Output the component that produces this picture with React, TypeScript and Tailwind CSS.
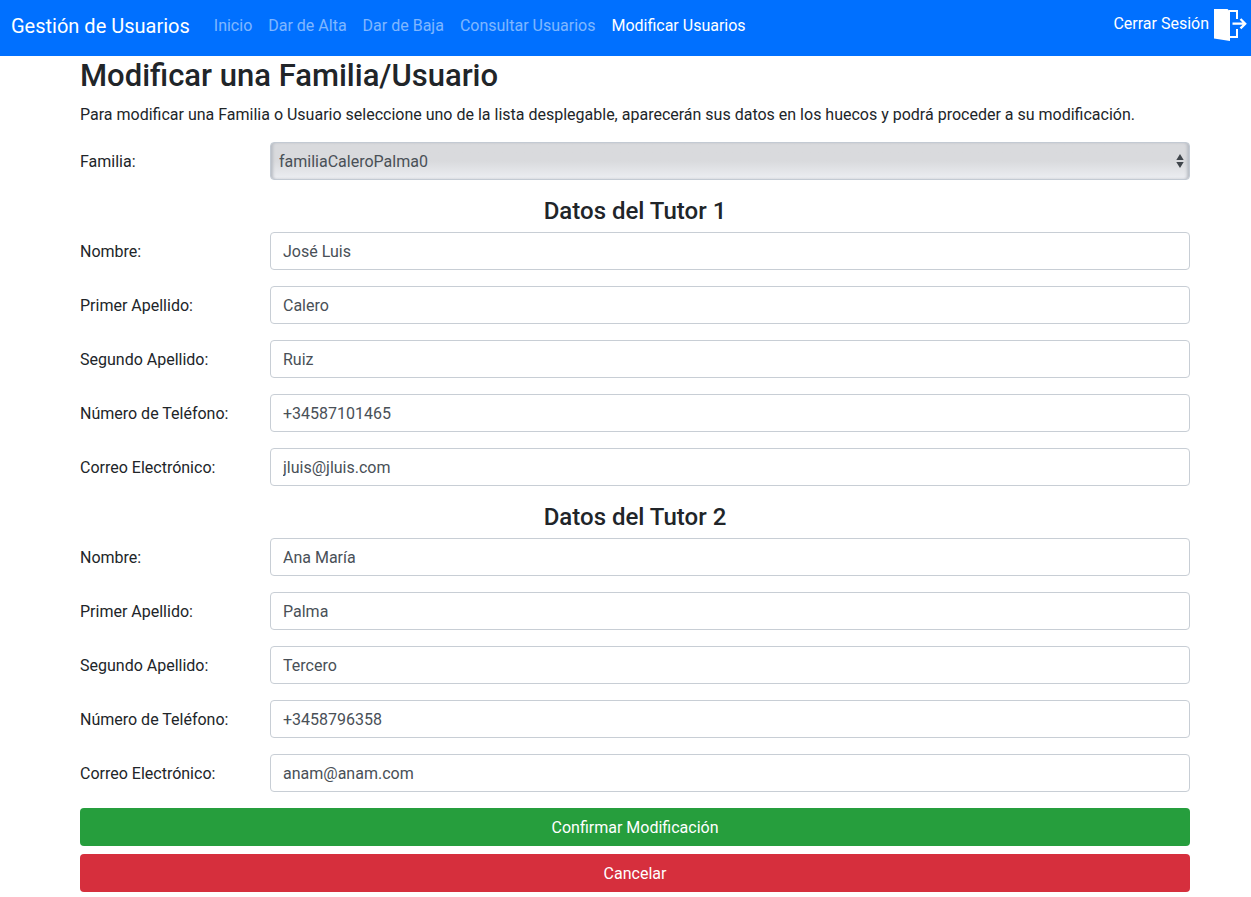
import React from 'react';

type Field = { label: string; value: string; type: string };

const tutors: { title: string; fields: Field[] }[] = [
  {
    title: 'Datos del Tutor 1',
    fields: [
      { label: 'Nombre:', value: 'José Luis', type: 'text' },
      { label: 'Primer Apellido:', value: 'Calero', type: 'text' },
      { label: 'Segundo Apellido:', value: 'Ruiz', type: 'text' },
      { label: 'Número de Teléfono:', value: '+34587101465', type: 'tel' },
      { label: 'Correo Electrónico:', value: 'jluis@jluis.com', type: 'email' },
    ],
  },
  {
    title: 'Datos del Tutor 2',
    fields: [
      { label: 'Nombre:', value: 'Ana María', type: 'text' },
      { label: 'Primer Apellido:', value: 'Palma', type: 'text' },
      { label: 'Segundo Apellido:', value: 'Tercero', type: 'text' },
      { label: 'Número de Teléfono:', value: '+3458796358', type: 'tel' },
      { label: 'Correo Electrónico:', value: 'anam@anam.com', type: 'email' },
    ],
  },
];

const links = ['Inicio', 'Dar de Alta', 'Dar de Baja', 'Consultar Usuarios', 'Modificar Usuarios'];

function ExitIcon() {
  return (
    <svg viewBox="0 0 34 34" className="size-[34px]" aria-hidden="true">
      <path d="M1 1H14.500L17 3.500V33L1 30.500Z" fill="#fff" />
      <path d="M16 3H24V11M24 21V29H17" fill="none" stroke="#fff" strokeWidth="2" />
      <path d="M19.500 15.700H32M27.500 11 32.200 15.700 27.500 20.400" fill="none" stroke="#fff" strokeWidth="2.300" />
    </svg>
  );
}

export default function App() {
  return (
    <div className="min-h-screen bg-white font-[Roboto,sans-serif] text-base leading-6 text-[#212529]">
      <nav className="flex h-14 items-center bg-[#0070ff] pb-1 pl-[11px] pr-1 text-white">
        <a href="#" className="mr-4 text-xl">Gestión de Usuarios</a>
        <ul className="flex">
          {links.map((l, i) => (
            <li key={l}>
              <a href="#" className={i === 4 ? 'px-2 text-white' : 'px-2 text-white/50'}>{l}</a>
            </li>
          ))}
        </ul>
        <a href="#" className="ml-auto flex items-center gap-1 pb-0.5">
          <span className="pb-0.5">Cerrar Sesión</span>
          <ExitIcon />
        </a>
      </nav>
      <main className="pl-20 pr-[61px]">
        <h1 className="mb-1.5 text-[31px] font-medium leading-10">Modificar una Familia/Usuario</h1>
        <p className="mb-[15px] pt-px">
          Para modificar una Familia o Usuario seleccione uno de la lista desplegable, aparecerán sus datos en los huecos y podrá proceder a su modificación.
        </p>
        <form>
          <div className="mb-4 flex items-center">
            <label htmlFor="familia" className="w-[190px] pt-0.5">Familia:</label>
            <div className="relative flex-1">
              <select
                id="familia"
                className="block h-[38px] w-full appearance-none rounded border border-[#c3cad3] bg-linear-to-b from-[#d9dadd] from-50% to-[#eceef2] pl-2 pr-6 pt-0.5 text-[#495057] shadow-[inset_3px_0_3px_-1px_#b9bdc4,inset_-3px_0_3px_-1px_#b9bdc4]"
              >
                <option>familiaCaleroPalma0</option>
              </select>
              <svg viewBox="0 0 8 14" className="pointer-events-none absolute right-1.5 top-3 h-[14px] w-2" aria-hidden="true">
                <path d="M4 0 7.700 6H.3ZM4 14 .3 8H7.700Z" fill="#40464c" />
              </svg>
            </div>
          </div>
          {tutors.map((t, ti) => (
            <fieldset key={t.title}>
              <legend className="mb-1.5 w-full text-center text-2xl font-medium leading-[30px]">{t.title}</legend>
              {t.fields.map((f, i) => (
                <div key={f.label} className="mb-4 flex items-center">
                  <label htmlFor={`t${ti}-${i}`} className="w-[190px] pt-0.5">{f.label}</label>
                  <input id={`t${ti}-${i}`} type={f.type} defaultValue={f.value} className="h-[38px] min-w-0 flex-1 rounded border border-[#c8ced5] bg-white px-3 text-[#495057]" />
                </div>
              ))}
            </fieldset>
          ))}
          <button type="submit" className="mb-2 block h-[38px] w-full rounded bg-[#269e3d] pt-0.5 text-white">Confirmar Modificación</button>
          <button type="button" className="block h-[38px] w-full rounded bg-[#d62f3d] pt-0.5 text-white">Cancelar</button>
        </form>
      </main>
    </div>
  );
}
